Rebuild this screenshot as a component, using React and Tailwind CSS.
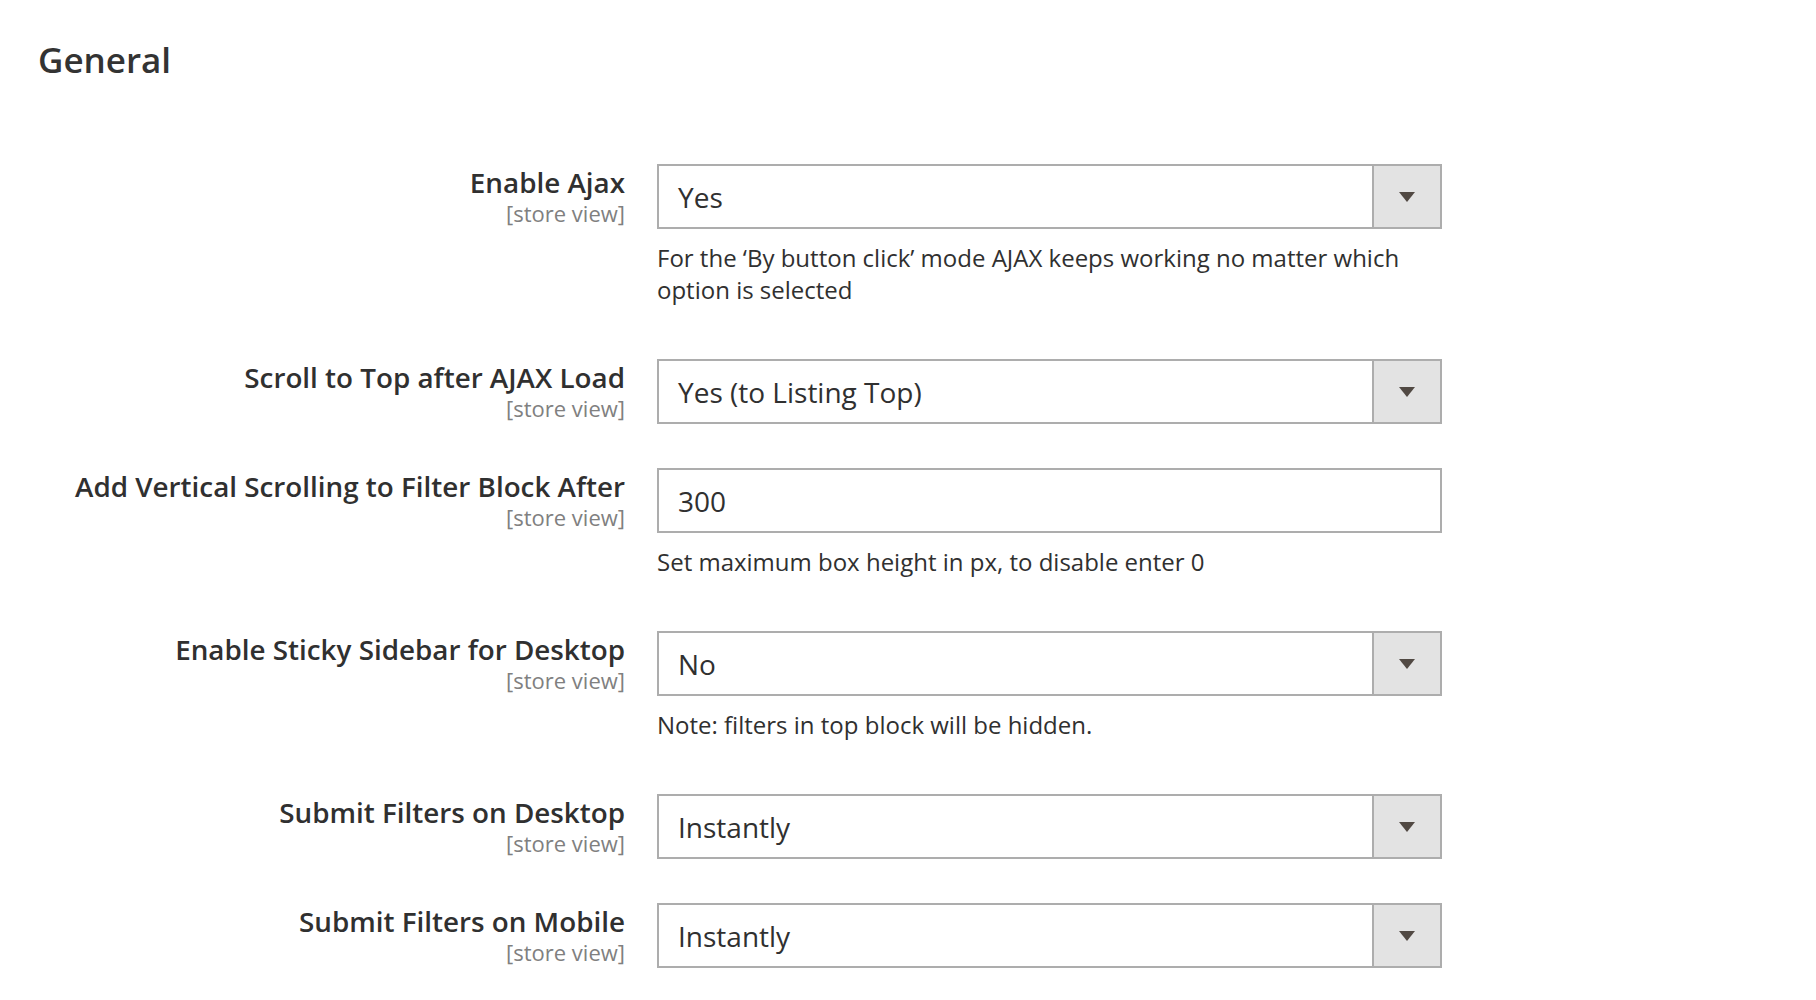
import React from "react";

const rows = [
  { label: "Enable Ajax", type: "select", value: "Yes", note: "For the ‘By button click’ mode AJAX keeps working no matter which option is selected" },
  { label: "Scroll to Top after AJAX Load", type: "select", value: "Yes (to Listing Top)" },
  { label: "Add Vertical Scrolling to Filter Block After", type: "input", value: "300", note: "Set maximum box height in px, to disable enter 0" },
  { label: "Enable Sticky Sidebar for Desktop", type: "select", value: "No", note: "Note: filters in top block will be hidden." },
  { label: "Submit Filters on Desktop", type: "select", value: "Instantly" },
  { label: "Submit Filters on Mobile", type: "select", value: "Instantly" },
];

function Control({ type, value }) {
  return (
    <div className="flex h-[65px] w-[785px] border-2 border-[#adadad] bg-white">
      <div className="flex flex-1 items-center pl-[19px] text-[28px] leading-none text-[#303030]">{value}</div>
      {type === "select" && (
        <div className="flex w-[68px] items-center justify-center border-l-2 border-[#adadad] bg-[#e3e3e3]">
          <svg width="16" height="10" viewBox="0 0 16 10">
            <path d="M0 0 H16 L8 10 Z" fill="#514943" />
          </svg>
        </div>
      )}
    </div>
  );
}

export default function App() {
  return (
    <div className="min-h-[1000px] w-[1816px] bg-white px-[38px] pt-[39px] font-['Open_Sans',sans-serif] text-[#303030]">
      <h2 className="text-[35px] font-semibold leading-[41px] text-[#333333]">General</h2>
      <div className="mt-[84px] flex flex-col">
        {rows.map((r) => (
          <div key={r.label} className="flex gap-[32px] pb-[44px]">
            <div className="flex w-[587px] flex-col items-end text-right">
              <div className="text-[27.8px] font-semibold leading-[36px] text-[#303030]">{r.label}</div>
              <div className="-mt-[1px] text-[22px] leading-[28px] text-[#808080]">[store view]</div>
            </div>
            <div className="flex flex-col">
              <Control type={r.type} value={r.value} />
              {r.note && (
                <div className="mb-[9px] mt-[13px] w-[785px] text-[24px] leading-[32px] text-[#303030]">{r.note}</div>
              )}
            </div>
          </div>
        ))}
      </div>
    </div>
  );
}
